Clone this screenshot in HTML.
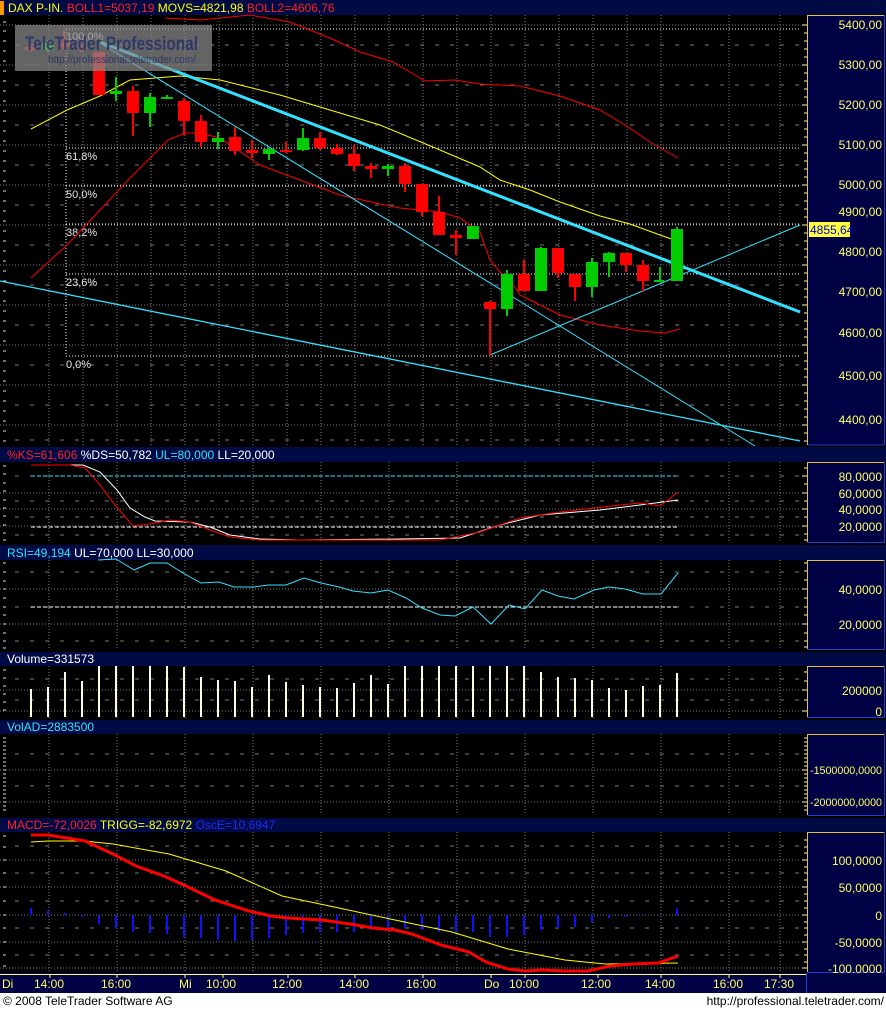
<!DOCTYPE html>
<html><head><meta charset="utf-8"><style>
html,body{margin:0;padding:0;background:#000;}
svg{display:block;font-family:"Liberation Sans",Arial,sans-serif;}
</style></head><body>
<svg width="886" height="1009" viewBox="0 0 886 1009" xmlns="http://www.w3.org/2000/svg">
<rect width="886" height="1009" fill="#000"/>
<!-- header bars -->
<rect x="0" y="0" width="886" height="15" fill="#000a44"/>
<rect x="0" y="1" width="4" height="14" fill="#ff9900"/>
<rect x="0" y="447" width="886" height="15" fill="#000a44"/>
<rect x="0" y="545" width="886" height="15" fill="#000a44"/>
<rect x="0" y="652" width="886" height="14" fill="#000a44"/>
<rect x="0" y="720" width="886" height="14" fill="#000a44"/>
<rect x="0" y="818" width="886" height="14" fill="#000a44"/>

<!-- grids -->
<g stroke="#7a7a7a" stroke-width="1" stroke-dasharray="1,2" fill="none">
<path d="M49 15V445M83 15V445M117 15V445M151 15V445M185 15V445M219 15V445M253 15V445M287 15V445M321 15V445M355 15V445M389 15V445M423 15V445M457 15V445M491 15V445M525 15V445M559 15V445M593 15V445M627 15V445M661 15V445M729 15V445M780 15V445"/>
<path d="M49 462V543M117 462V543M185 462V543M253 462V543M321 462V543M389 462V543M457 462V543M525 462V543M593 462V543M661 462V543M729 462V543M780 462V543"/>
<path d="M49 560V650M117 560V650M185 560V650M253 560V650M321 560V650M389 560V650M457 560V650M525 560V650M593 560V650M661 560V650M729 560V650M780 560V650"/>
<path d="M49 666V718M117 666V718M185 666V718M253 666V718M321 666V718M389 666V718M457 666V718M525 666V718M593 666V718M661 666V718M729 666V718M780 666V718"/>
<path d="M49 734V815M117 734V815M185 734V815M253 734V815M321 734V815M389 734V815M457 734V815M525 734V815M593 734V815M661 734V815M729 734V815M780 734V815"/>
<path d="M49 832V972M117 832V972M185 832V972M253 832V972M321 832V972M389 832V972M457 832V972M525 832V972M593 832V972M661 832V972M729 832V972M780 832V972"/>
<path d="M0 25H800M0 65H800M0 105H800M0 145H800M0 185H800M0 225H800M0 265H800M0 305H800M0 345H800M0 385H800M0 425H800"/>
<path d="M0 493H800M0 509H800M0 526H800"/>
<path d="M0 589H800M0 624H800"/>
<path d="M0 690H800M0 711H800"/>
<path d="M0 770H800M0 802H800"/>
<path d="M0 860H800M0 887H800M0 915H800M0 942H800M0 968H800"/>
</g>
<g stroke="#7a7a7a" stroke-width="1" stroke-dasharray="4,11" fill="none">
<path d="M15 45H800M15 85H800M15 125H800M15 165H800M15 205H800M15 245H800M15 285H800M15 325H800M15 365H800M15 405H800M15 440H800"/>
<path d="M15 476H800M15 501H800M15 517H800M15 535H800"/>
<path d="M15 572H800M15 607H800M15 641H800"/>
<path d="M15 679H800M15 700H800"/>
<path d="M15 754H800M15 786H800"/>
<path d="M15 846H800M15 873H800M15 901H800M15 928H800M15 955H800"/>
</g>
<!-- left ticks -->
<g stroke="#ddd" stroke-width="1">
<path d="M3 22h3M3 31h3M3 41h3M3 51h3M3 61h3M3 71h3M3 81h3M3 91h3M3 101h3M3 111h3M3 121h3M3 131h3M3 141h3M3 151h3M3 161h3M3 171h3M3 181h3M3 191h3M3 201h3M3 211h3M3 221h3M3 231h3M3 241h3M3 251h3M3 261h3M3 271h3M3 281h3M3 291h3M3 301h3M3 311h3M3 321h3M3 331h3M3 341h3M3 351h3M3 361h3M3 371h3M3 381h3M3 391h3M3 401h3M3 411h3M3 421h3M3 431h3M3 441h3"/>
<path d="M3 466h3M3 474h3M3 483h3M3 491h3M3 500h3M3 508h3M3 516h3M3 525h3M3 533h3M3 540h3"/>
<path d="M3 563h3M3 572h3M3 581h3M3 589h3M3 598h3M3 607h3M3 615h3M3 624h3M3 633h3M3 641h3M3 648h3"/>
<path d="M3 670h3M3 678h3M3 686h3M3 694h3M3 702h3M3 710h3"/>
<path d="M3 738h3M3 742h3M3 746h3M3 750h3M3 754h3M3 758h3M3 762h3M3 766h3M3 770h3M3 774h3M3 778h3M3 782h3M3 786h3M3 790h3M3 794h3M3 798h3M3 802h3M3 806h3M3 810h3"/>
<path d="M3 836h3M3 847h3M3 860h3M3 873h3M3 887h3M3 901h3M3 915h3M3 928h3M3 942h3M3 955h3M3 966h3"/>
</g>

<!-- ===== MAIN CHART ===== -->
<g stroke="#fff" stroke-width="1" stroke-dasharray="1,2" fill="none">
<path d="M66 29H800M66 148H800M66 186H800M66 224H800M66 274H800M66 356H800M66 29V356"/>
</g>
<g fill="#e8e8e8" font-size="11">
<text x="66" y="40">100,0%</text>
<text x="66" y="160">61,8%</text>
<text x="66" y="198">50,0%</text>
<text x="66" y="236">38,2%</text>
<text x="66" y="286">23,6%</text>
<text x="66" y="368">0,0%</text>
</g>
<polyline fill="none" stroke="#ff0000" stroke-width="1" points="165,18 200,20 230,17 250,15 290,22 330,38 360,52 393,62 410,72 425,81 455,80 480,84 520,86 560,96 600,110 625,125 650,142 678,158"/>
<polyline fill="none" stroke="#ff0000" stroke-width="1" points="31,278 67,245 100,210 133,175 168,140 185,133 200,133 220,138 260,165 300,180 340,195 380,204 400,208 440,212 460,218 480,232 490,260 500,272 510,280 520,295 540,305 560,315 600,325 640,331 665,333 680,329"/>
<polyline fill="none" stroke="#ffff00" stroke-width="1" points="31,129 67,110 100,96 130,80 180,76 220,80 280,95 330,110 380,125 440,150 480,167 500,180 530,190 560,202 600,216 630,224 660,235 680,242"/>
<line x1="100" y1="43" x2="755" y2="446" stroke="#33e0ff" stroke-width="1"/>
<line x1="490" y1="355" x2="800" y2="225" stroke="#33e0ff" stroke-width="1"/>
<line x1="0" y1="281" x2="800" y2="441" stroke="#33e0ff" stroke-width="1.3"/>
<line x1="100" y1="42" x2="800" y2="312" stroke="#33e0ff" stroke-width="3"/>
<g stroke="#ff0000" stroke-width="2" fill="#ff0000">
<path d="M31 45V52M64 30V50M81 45V52M133 86V136M184 98V135M201 115V147M235 127V155M252 140V158M286 142V153M320 132V150M337 144V155M354 145V171M371 163V178M405 163V192M422 184V216M439 196V235M456 230V255M490 301V356M524 260V291M558 248V278M575 274V301M626 253V272M643 260V291"/>
</g>
<g fill="#ff0000">
<rect x="25" y="47" width="12" height="3"/>
<rect x="58" y="43" width="12" height="4"/>
<rect x="75" y="47" width="12" height="3"/>
<rect x="93" y="52" width="12" height="43"/>
<rect x="127" y="91" width="12" height="22"/>
<rect x="178" y="101" width="12" height="20"/>
<rect x="195" y="121" width="12" height="21"/>
<rect x="229" y="137" width="12" height="14"/>
<rect x="246" y="150" width="12" height="3"/>
<rect x="280" y="150" width="12" height="2"/>
<rect x="314" y="138" width="12" height="10"/>
<rect x="331" y="148" width="12" height="6"/>
<rect x="348" y="154" width="12" height="12"/>
<rect x="365" y="166" width="12" height="3"/>
<rect x="399" y="166" width="12" height="18"/>
<rect x="416" y="184" width="12" height="28"/>
<rect x="433" y="212" width="12" height="23"/>
<rect x="450" y="235" width="12" height="3"/>
<rect x="484" y="302" width="12" height="7"/>
<rect x="518" y="274" width="12" height="17"/>
<rect x="552" y="248" width="12" height="25"/>
<rect x="569" y="274" width="12" height="13"/>
<rect x="620" y="253" width="12" height="12"/>
<rect x="637" y="265" width="12" height="16"/>
</g>
<g stroke="#00cc00" stroke-width="2" fill="none">
<path d="M48 40V52M116 77V101M150 93V127M167 95V99M218 132V149M269 148V160M303 128V151M388 164V176M507 270V316M541 247V291M592 258V297M609 252V277M660 267V282M677 227V281"/>
</g>
<g fill="#00cc00">
<rect x="42" y="43" width="12" height="7"/>
<rect x="110" y="91" width="12" height="3"/>
<rect x="144" y="97" width="12" height="16"/>
<rect x="161" y="97" width="12" height="2"/>
<rect x="212" y="138" width="12" height="4"/>
<rect x="263" y="149" width="12" height="5"/>
<rect x="297" y="138" width="12" height="12"/>
<rect x="382" y="166" width="12" height="3"/>
<rect x="467" y="226" width="12" height="13"/>
<rect x="501" y="274" width="12" height="35"/>
<rect x="535" y="248" width="12" height="43"/>
<rect x="586" y="262" width="12" height="25"/>
<rect x="603" y="253" width="12" height="9"/>
<rect x="654" y="280" width="10" height="2"/>
<rect x="671" y="229" width="12" height="52"/>
</g>
<!-- watermark -->
<rect x="15" y="25" width="197" height="46" fill="#8a8a8a" opacity="0.72"/>
<text x="25" y="50" font-size="19" font-weight="bold" fill="#2a3568" opacity="0.9" textLength="173" lengthAdjust="spacingAndGlyphs">TeleTrader Professional</text>
<text x="48" y="63" font-size="11" fill="#2a3568" opacity="0.9" textLength="148" lengthAdjust="spacingAndGlyphs">http://professional.teletrader.com/</text>

<text x="8" y="12" font-size="12"><tspan fill="#ffff00">DAX P-IN. </tspan><tspan fill="#ff2020">BOLL1=5037,19 </tspan><tspan fill="#ffff00">MOVS=4821,98 </tspan><tspan fill="#ff2020">BOLL2=4606,76</tspan></text>
<text x="7" y="459" font-size="12"><tspan fill="#ff2020">%KS=61,606 </tspan><tspan fill="#fff">%DS=50,782 </tspan><tspan fill="#33e0ff">UL=80,000 </tspan><tspan fill="#fff">LL=20,000</tspan></text>
<text x="7" y="557" font-size="12"><tspan fill="#33e0ff">RSI=49,194 </tspan><tspan fill="#fff">UL=70,000 LL=30,000</tspan></text>
<text x="7" y="663" font-size="12" fill="#fff">Volume=331573</text>
<text x="7" y="731" font-size="12" fill="#33e0ff">VolAD=2883500</text>
<text x="7" y="829" font-size="12"><tspan fill="#ff2020">MACD=-72,0026 </tspan><tspan fill="#ffff00">TRIGG=-82,6972 </tspan><tspan fill="#1a2cff">OscE=10,6947</tspan></text>

<line x1="31" y1="476" x2="678" y2="476" stroke="#33e0ff" stroke-dasharray="4,2"/>
<line x1="31" y1="527" x2="678" y2="527" stroke="#fff" stroke-dasharray="4,2"/>
<polyline fill="none" stroke="#fff" stroke-width="1" points="31,465 83,465 100,472 117,490 130,508 145,517 155,521 190,522 210,527 230,535 260,539 300,540 400,539 460,538 500,525 540,515 600,510 640,505 678,500"/>
<polyline fill="none" stroke="#ff0000" stroke-width="1" points="31,465 70,465 85,468 100,485 115,505 133,526 150,524 170,520 190,522 210,530 230,537 260,540 440,540 480,532 520,518 560,512 620,505 640,503 660,506 678,492"/>

<line x1="31" y1="607" x2="678" y2="607" stroke="#fff" stroke-dasharray="4,2"/>
<polyline fill="none" stroke="#33e0ff" stroke-width="1" points="98,560 116,559 134,570 150,563 167,563 183,573 201,583 219,582 234,587 254,587 268,585 286,585 304,578 321,583 339,587 353,591 371,593 388,590 406,598 422,608 440,615 455,616 473,607 491,624 509,605 525,609 542,590 558,596 574,599 594,590 609,587 625,589 643,594 661,594 678,573"/>

<g stroke="#fffbe0" stroke-width="2">
<path d="M31 689V717M48 687V717M65 672V717M82 681V717M99 666V717M116 666V717M133 666V717M150 666V717M167 666V717M184 667V717M201 677V717M218 680V717M235 681V717M252 687V717M269 675V717M286 682V717M303 685V717M320 687V717M337 688V717M354 683V717M371 675V717M388 684V717M405 666V717M422 666V717M439 666V717M456 666V717M473 666V717M490 666V717M507 666V717M524 666V717M541 672V717M558 677V717M575 678V717M592 680V717M609 688V717M626 690V717M643 686V717M660 685V717M677 673V717"/>
</g>

<g stroke="#1010ff" stroke-width="2">
<path d="M31 908V915M48 911V915M65 913V915M82 915V917M99 915V924M116 915V928M133 915V932M150 915V933M167 915V934M184 915V937M201 915V938M218 915V940M235 915V941M252 915V940M269 915V938M286 915V935M303 915V933M320 915V932M337 915V932M354 915V932M371 915V930M388 915V928M405 915V928M422 915V930M439 915V932M456 915V932M473 915V932M490 915V937M507 915V937M524 915V935M541 915V930M558 915V928M575 915V927M592 915V922M609 915V918M626 915V917M643 915V916M660 915V916M677 908V915"/>
</g>
<polyline fill="none" stroke="#ffff00" stroke-width="1" points="31,842 48,841 85,841 113,844 169,854 226,871 282,896 339,908 395,920 452,932 508,949 565,960 605,964 678,963"/>
<polyline fill="none" stroke="#ff0000" stroke-width="3" points="31,835 48,835 85,841 113,854 136,866 164,876 186,886 215,900 249,911 271,916 288,918 322,920 350,924 373,928 395,930 412,934 441,945 469,952 486,962 508,969 525,971 542,970 565,971 588,971 610,966 633,964 658,963 678,956"/>

<g fill="#000044">
<rect x="807" y="15" width="77" height="430"/>
<rect x="807" y="462" width="77" height="80"/>
<rect x="807" y="560" width="77" height="89"/>
<rect x="807" y="666" width="77" height="51"/>
<rect x="807" y="734" width="77" height="81"/>
<rect x="807" y="832" width="77" height="140"/>
</g>
<g fill="none" stroke-width="1">
<path d="M807.5 445V15.5H884" stroke="#e8c040"/><path d="M807.5 445H884.5V15" stroke="#2040d0"/>
<path d="M807.5 542V462.5H884" stroke="#e8c040"/><path d="M807.5 542.5H884.5V462" stroke="#2040d0"/>
<path d="M807.5 649V560.5H884" stroke="#e8c040"/><path d="M807.5 649.5H884.5V560" stroke="#2040d0"/>
<path d="M807.5 717V666.5H884" stroke="#e8c040"/><path d="M807.5 717.5H884.5V666" stroke="#2040d0"/>
<path d="M807.5 815V734.5H884" stroke="#e8c040"/><path d="M807.5 815.5H884.5V734" stroke="#2040d0"/>
<path d="M807.5 972V832.5H884" stroke="#e8c040"/><path d="M807.5 972.5H884.5V832" stroke="#2040d0"/>
</g>
<g stroke="#fff8c0" stroke-width="1">
<path d="M802 25h5M804 33h3M804 41h3M804 49h3M804 57h3M802 65h5M804 73h3M804 81h3M804 89h3M804 97h3M802 105h5M804 113h3M804 121h3M804 129h3M804 137h3M802 145h5M804 153h3M804 161h3M804 169h3M804 177h3M802 185h5M804 193h3M804 201h3M804 209h3M804 217h3M802 225h5M804 233h3M804 241h3M804 249h3M804 257h3M802 265h5M804 273h3M804 281h3M804 289h3M804 297h3M802 305h5M804 313h3M804 321h3M804 329h3M804 337h3M802 345h5M804 353h3M804 361h3M804 369h3M804 377h3M802 385h5M804 393h3M804 401h3M804 409h3M804 417h3M802 425h5M804 433h3M804 441h3"/>
<path d="M804 468h3M802 476h5M804 484h3M802 493h5M804 501h3M802 509h5M804 517h3M802 526h5M804 534h3M804 540h3"/>
<path d="M804 563h3M804 571h3M804 580h3M802 589h5M804 598h3M804 607h3M804 615h3M802 624h5M804 633h3M804 641h3M804 647h3"/>
<path d="M804 672h3M804 681h3M802 690h5M804 700h3M802 711h5"/>
<path d="M804 738h3M804 742h3M804 746h3M804 750h3M804 754h3M804 758h3M804 762h3M804 766h3M802 770h5M804 774h3M804 778h3M804 782h3M804 786h3M804 790h3M804 794h3M804 798h3M802 802h5M804 806h3M804 810h3"/>
<path d="M804 840h3M804 847h3M804 853h3M802 860h5M804 867h3M804 873h3M804 880h3M802 887h5M804 894h3M804 901h3M804 908h3M802 915h5M804 922h3M804 928h3M804 935h3M802 942h5M804 949h3M804 955h3M804 962h3M802 968h5"/>
</g>
<g fill="#ffff66" font-size="12" text-anchor="end">
<text x="882" y="29">5400,00</text>
<text x="882" y="69">5300,00</text>
<text x="882" y="109">5200,00</text>
<text x="882" y="149">5100,00</text>
<text x="882" y="189">5000,00</text>
<text x="882" y="216">4900,00</text>
<text x="882" y="256">4800,00</text>
<text x="882" y="296">4700,00</text>
<text x="882" y="337">4600,00</text>
<text x="882" y="380">4500,00</text>
<text x="882" y="424">4400,00</text>
<text x="882" y="481">80,0000</text>
<text x="882" y="498">60,0000</text>
<text x="882" y="514">40,0000</text>
<text x="882" y="531">20,0000</text>
<text x="882" y="594">40,0000</text>
<text x="882" y="629">20,0000</text>
<text x="882" y="695">200000</text>
<text x="882" y="716">0</text>
<text x="882" y="865">100,0000</text>
<text x="882" y="892">50,0000</text>
<text x="882" y="920">0</text>
<text x="882" y="947">-50,0000</text>
<text x="882" y="973">-100,0000</text>
</g>
<g fill="#ffff66" font-size="11">
<text x="810" y="774" textLength="72" lengthAdjust="spacingAndGlyphs">-1500000,0000</text>
<text x="810" y="806" textLength="72" lengthAdjust="spacingAndGlyphs">-2000000,0000</text>
</g>
<rect x="809" y="222" width="41" height="15" fill="#ffff40"/>
<text x="810" y="234" font-size="12" fill="#0000cc">4855,64</text>

<rect x="0" y="973" width="886" height="20" fill="#000044"/>
<line x1="0" y1="974.5" x2="806" y2="974.5" stroke="#ffff80"/>
<line x1="806.5" y1="973" x2="806.5" y2="993" stroke="#2040d0"/>
<g stroke="#ffff80"><path d="M50 975v3M117 975v3M185 975v3M223 975v3M288 975v3M355 975v3M423 975v3M491 975v3M525 975v3M598 975v3M661 975v3M729 975v3M780 975v3"/></g>
<g fill="#ffff66" font-size="12">
<text x="2" y="988">Di</text>
<text x="34" y="988">14:00</text>
<text x="101" y="988">16:00</text>
<text x="179" y="988">Mi</text>
<text x="206" y="988">10:00</text>
<text x="272" y="988">12:00</text>
<text x="339" y="988">14:00</text>
<text x="406" y="988">16:00</text>
<text x="484" y="988">Do</text>
<text x="509" y="988">10:00</text>
<text x="581" y="988">12:00</text>
<text x="645" y="988">14:00</text>
<text x="713" y="988">16:00</text>
<text x="764" y="988">17:30</text>
</g>
<rect x="0" y="993" width="886" height="16" fill="#fff"/>
<text x="3" y="1005" font-size="12" fill="#000">© 2008 TeleTrader Software AG</text>
<text x="884" y="1005" font-size="12" fill="#000" text-anchor="end">http://professional.teletrader.com/</text>
</svg>
</body></html>
